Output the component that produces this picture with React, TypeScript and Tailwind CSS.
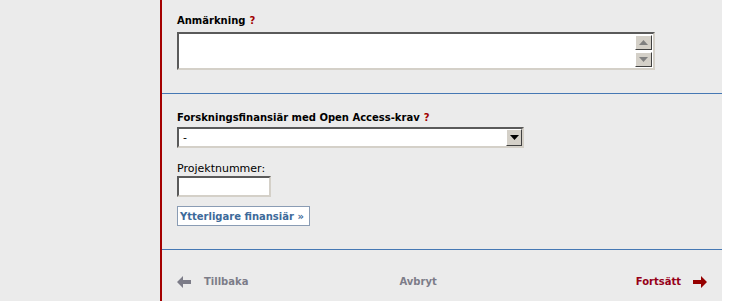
import React from 'react';

const font = { fontFamily: '"DejaVu Sans", Verdana, sans-serif' };

const Help = () => <span className="ml-1 text-[#a00000]">?</span>;

const Divider = () => <div className="h-[2px] w-full shrink-0 border-t border-t-[rgb(70,120,180)] bg-[#ebebeb]" />;

const ScrollButton = ({ dir }: { dir: 'up' | 'down' }) => (
  <div className="flex h-[17px] w-[17px] items-center justify-center border border-t-white border-l-white border-r-[#404040] border-b-[#404040] bg-[#d4d0c8]">
    <svg width="9" height="5" viewBox="0 0 9 5">
      {dir === 'up' ? (
        <polygon points="0,5 9,5 4.5,0" fill="#808080" />
      ) : (
        <polygon points="0,0 9,0 4.5,5" fill="#808080" />
      )}
    </svg>
  </div>
);

export default function App() {
  return (
    <div className="flex h-[301px] w-[749px] bg-white text-[11px]" style={font}>
      <div className="w-[160px] shrink-0 bg-[#ebebeb]" />
      <div className="w-[2px] shrink-0 bg-[#a40000]" />
      <div className="flex w-[560px] shrink-0 flex-col bg-[#ebebeb]">
        {/* Anmärkning */}
        <section className="h-[93px] pl-[15px] pt-[14px]">
          <div className="h-[18px] text-[10px] font-bold leading-[13px] text-black">
            Anmärkning
            <Help />
          </div>
          <div className="flex h-[38px] w-[478px] border-2 border-t-[#5a5a5a] border-l-[#5a5a5a] border-r-[#d4d0c8] border-b-[#d4d0c8] bg-white">
            <div className="flex-1" />
            <div className="flex flex-col gap-[2px] py-px pr-px">
              <ScrollButton dir="up" />
              <ScrollButton dir="down" />
            </div>
          </div>
        </section>
        <Divider />

        {/* Finansiär */}
        <section className="h-[154px] pl-[15px] pt-[16px]">
          <div className="h-[16px] text-[10px] font-bold leading-[13px] text-black">
            Forskningsfinansiär med Open Access-krav
            <Help />
          </div>
          <div className="flex h-[21px] w-[347px] items-center border-2 border-t-[#5a5a5a] border-l-[#5a5a5a] border-r-[#d4d0c8] border-b-[#d4d0c8] bg-white">
            <div className="flex-1 pl-[4px] leading-none">-</div>
            <div className="flex h-[17px] w-[16px] items-center justify-center border border-t-white border-l-white border-r-[#404040] border-b-[#404040] bg-[#d4d0c8]">
              <svg width="9" height="5" viewBox="0 0 9 5">
                <polygon points="0,0 9,0 4.5,5" fill="#000" />
              </svg>
            </div>
          </div>
          <div className="mt-[14px] leading-[13px] text-black">Projektnummer:</div>
          <div className="mt-[1px] h-[21px] w-[94px] border-2 border-t-[#5a5a5a] border-l-[#5a5a5a] border-r-[#d4d0c8] border-b-[#d4d0c8] bg-white" />
          <button className="mt-[9px] flex h-[20px] w-[133px] items-center whitespace-nowrap border border-[#8a9cb4] bg-white px-[2px] text-[10px] font-bold text-[#3d6a9a]">
            Ytterligare finansiär »
          </button>
        </section>
        <Divider />

        {/* Navigation */}
        <div className="flex items-center pl-[15px] pr-[15px] pt-[23px] text-[10px] font-bold">
          <svg width="14" height="12" viewBox="0 0 14 12" className="mr-[13px]">
            <polygon points="0,6 6,0 6,4 14,4 14,8 6,8 6,12" fill="#7c7c88" />
          </svg>
          <span className="text-[#7c7c88]">Tillbaka</span>
          <span className="ml-[151px] text-[#7c7c88]">Avbryt</span>
          <span className="ml-auto mr-[2px] text-[#960018]">Fortsätt</span>
          <svg width="14" height="12" viewBox="0 0 14 12" className="ml-[10px]">
            <polygon points="14,6 8,0 8,4 0,4 0,8 8,8 8,12" fill="#960000" />
          </svg>
        </div>
      </div>
      <div className="flex-1 bg-white" />
    </div>
  );
}
